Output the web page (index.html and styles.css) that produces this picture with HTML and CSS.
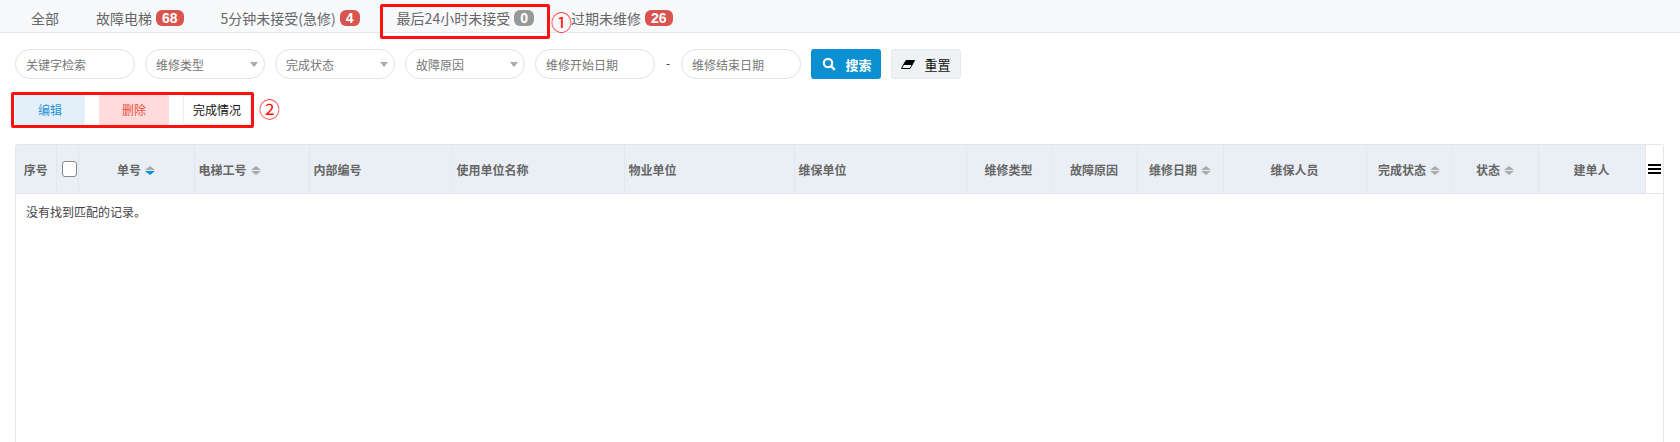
FILE: index.html
```html
<!DOCTYPE html>
<html>
<head>
	<meta charset="UTF-8">
	<title>维修管理</title>
	<link rel="stylesheet" href="styles.css">
</head>
<body>

<div class="tabsBar">
	<b>全部</b>
	<b>故障电梯<i>68</i></b>
	<b>5分钟未接受(急修)<i>4</i></b>
	<b>最后24小时未接受<i class="zero">0</i></b>
	<b>过期未维修<i>26</i></b>
</div>

<div class="filters">
	<span class="field">关键字检索</span>
	<span class="field select">维修类型</span>
	<span class="field select">完成状态</span>
	<span class="field select">故障原因</span>
	<span class="field">维修开始日期</span>
	<span class="dash">-</span>
	<span class="field">维修结束日期</span>
	<span class="btn search">
		<svg width="14" height="14" viewBox="0 0 14 14"><circle cx="6" cy="6" r="4.2" fill="none" stroke="#fff" stroke-width="2.2"/><path d="M9 9l3.8 3.8" stroke="#fff" stroke-width="2.4"/></svg>
		搜索
	</span>
	<span class="btn reset">
		<svg width="14" height="9" viewBox="0 0 14 9"><path d="M5 .5H13.5L9 8.5H.5Z" fill="#fff" stroke="#000"/><path d="M5 .5H13.5L11 5H2.5Z" fill="#000"/></svg>
		重置
	</span>
</div>

<div class="actions">
	<span class="edit">编辑</span>
	<span class="del">删除</span>
	<span class="done">完成情况</span>
</div>

<div class="tableWrap">
	<table>
		<colgroup>
			<col class="c40"><col class="c22"><col class="c116"><col class="c115"><col class="c143"><col class="c172"><col class="c170"><col class="c172">
			<col class="c85"><col class="c86"><col class="c86"><col class="c143"><col class="c86"><col class="c86"><col class="c107"><col class="c18">
		</colgroup>
		<thead>
			<tr>
				<th>序号</th>
				<th><span class="check"></span></th>
				<th>单号<span class="sort down"></span></th>
				<th class="left">电梯工号<span class="sort"></span></th>
				<th class="left">内部编号</th>
				<th class="left">使用单位名称</th>
				<th class="left">物业单位</th>
				<th class="left">维保单位</th>
				<th>维修类型</th>
				<th>故障原因</th>
				<th>维修日期<span class="sort"></span></th>
				<th>维保人员</th>
				<th>完成状态<span class="sort"></span></th>
				<th>状态<span class="sort"></span></th>
				<th>建单人</th>
				<th class="menu"><span class="burger"></span></th>
			</tr>
		</thead>
		<tbody>
			<tr><td colspan="16">没有找到匹配的记录。</td></tr>
		</tbody>
	</table>
</div>

<!-- annotations drawn over the screenshot -->
<div class="mark mark1"></div>
<div class="num num1">①</div>
<div class="mark mark2"></div>
<div class="num num2">②</div>

</body>
</html>
```

FILE: styles.css
```css
html, body
{
	height: 100%;
	margin: 0;
	padding: 0;
	overflow: hidden;
	background-color: #fff;
	color: #555;
	font-family: "Noto Sans CJK SC", "Liberation Sans", sans-serif;
	font-size: 12px;
}
body
{
	display: flex;
	flex-direction: column;
	position: relative;
}

.tabsBar
{
	display: flex;
	flex: none;
	gap: 7px;
	height: 32px;
	padding-left: 16px;
	background-color: #f8f9fb;
	border-bottom: 1px solid #e4e7ec;
}
.tabsBar b
{
	display: flex;
	align-items: center;
	padding: 3px 15px 0;
	font-size: 14px;
	font-weight: normal;
	color: #666;
}
.tabsBar i
{
	margin-left: 4px;
	padding: 0 6px;
	min-width: 7px;
	height: 16px;
	line-height: 16px;
	border-radius: 6px;
	background-color: #d9534f;
	color: #fff;
	font-family: "Liberation Sans", sans-serif;
	font-size: 14px;
	font-style: normal;
	font-weight: bold;
	text-align: center;
}
.tabsBar i.zero
{
	background-color: #999;
}

.filters
{
	display: flex;
	flex: none;
	align-items: center;
	gap: 10px;
	margin: 16px 15px 0;
}
.field
{
	box-sizing: border-box;
	position: relative;
	width: 120px;
	height: 30px;
	line-height: 30px;
	padding: 0 10px;
	border: 1px solid #e2e2e2;
	border-radius: 15px;
	color: #777;
}
.select:after
{
	content: "";
	position: absolute;
	top: 12px;
	right: 6px;
	border-top: 5px solid #aaa;
	border-left: 4px solid transparent;
	border-right: 4px solid transparent;
}
.dash
{
	width: 6px;
	margin-top: -4px;
	text-align: center;
	color: #333;
}
.btn
{
	box-sizing: border-box;
	display: flex;
	align-items: center;
	justify-content: center;
	gap: 9px;
	width: 70px;
	height: 30px;
	border-radius: 3px;
	font-size: 13px;
}
.search
{
	padding-left: 2px;
	background-color: #0a8fd1;
	color: #fff;
	font-weight: bold;
}
.reset
{
	gap: 9px;
	background-color: #eef2f5;
	border: 1px solid #e4e9ed;
	color: #111;
}

.actions
{
	display: flex;
	flex: none;
	gap: 14px;
	margin: 16px 15px 0;
	height: 30px;
	line-height: 30px;
	text-align: center;
}
.actions span
{
	width: 70px;
	border-radius: 2px;
}
.edit
{
	background-color: #e3f0fa;
	color: #2d93d8;
}
.del
{
	background-color: #ffdcdc;
	color: #e8503f;
}
.actions .done
{
	box-sizing: border-box;
	width: 68px;
	line-height: 28px;
	background-color: #fff;
	border: 1px solid #eee;
	color: #111;
}

.tableWrap
{
	flex: 1;
	margin: 19px 16px 0 15px;
	border: 1px solid #e6e6e6;
	border-bottom: 0;
	border-radius: 3px 3px 0 0;
}
table
{
	table-layout: fixed;
	border-collapse: collapse;
	width: 1647px;
}
.c18 { width: 18px; }
.c22 { width: 22px; }
.c40 { width: 40px; }
.c85 { width: 85px; }
.c86 { width: 86px; }
.c107 { width: 107px; }
.c115 { width: 115px; }
.c116 { width: 116px; }
.c143 { width: 143px; }
.c170 { width: 170px; }
.c172 { width: 172px; }

th
{
	height: 48px;
	padding: 0;
	background-color: #eaeff5;
	border-right: 1px solid #e3e6ea;
	border-bottom: 1px solid #e3e6ea;
	color: #666;
	font-weight: bold;
	text-align: center;
	white-space: nowrap;
}
th.left
{
	padding-left: 4px;
	text-align: left;
}
th.menu
{
	background-color: #fff;
	border-right: 0;
}
td
{
	padding: 9px 10px;
	color: #444;
}

.check
{
	box-sizing: border-box;
	display: block;
	width: 15px;
	height: 16px;
	margin-left: 5px;
	background-color: #fff;
	border: 1px solid #888;
	border-radius: 3px;
}
.sort
{
	display: inline-block;
	width: 10px;
	height: 10px;
	margin-left: 4px;
	vertical-align: -1px;
}
.sort:before,
.sort:after
{
	content: "";
	display: block;
	border-left: 5px solid transparent;
	border-right: 5px solid transparent;
}
.sort:before
{
	border-bottom: 4px solid #aaa;
	margin-bottom: 1px;
}
.sort:after
{
	border-top: 4px solid #aaa;
}
.sort.down:after
{
	border-top-color: #0a8fd1;
}
.burger
{
	display: block;
	width: 13px;
	height: 2px;
	margin: 0 auto;
	background-color: #000;
	box-shadow: 0 -4px 0 #000, 0 4px 0 #000;
}

.mark
{
	position: absolute;
	box-sizing: border-box;
	border: 3px solid #f11;
	border-radius: 2px;
}
.mark1
{
	left: 380px;
	top: 4px;
	width: 170px;
	height: 35px;
}
.mark2
{
	left: 11px;
	top: 92px;
	width: 243px;
	height: 36px;
}
.num
{
	position: absolute;
	color: #f11;
	font-size: 21px;
	line-height: 21px;
}
.num1
{
	left: 551px;
	top: 11px;
}
.num2
{
	left: 259px;
	top: 98px;
}
```
